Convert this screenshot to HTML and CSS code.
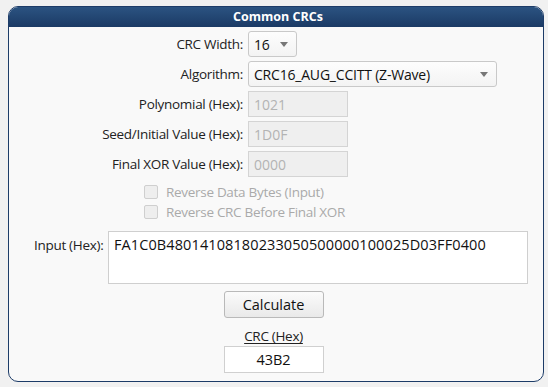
FILE: index.html
```html
<!DOCTYPE html>
<html lang="en">
<head>
    <meta charset="UTF-8">
    <title>Common CRCs</title>
    <link rel="stylesheet" href="styles.css">
</head>
<body>
    <div class="panel">
        <div class="panel-title">Common CRCs</div>
        <div class="panel-body">
            <div class="form-grid">
                <label class="field-label">CRC Width:</label>
                <div class="select-wrap width-select">
                    <select>
                        <option>16</option>
                    </select>
                    <svg class="arrow" width="8" height="5" viewBox="0 0 8 5"><path d="M0 0h8L4 5z" fill="#777"/></svg>
                </div>

                <label class="field-label">Algorithm:</label>
                <div class="select-wrap algo-select">
                    <select>
                        <option>CRC16_AUG_CCITT (Z-Wave)</option>
                    </select>
                    <svg class="arrow" width="8" height="5" viewBox="0 0 8 5"><path d="M0 0h8L4 5z" fill="#777"/></svg>
                </div>

                <label class="field-label">Polynomial (Hex):</label>
                <input class="hex-field" type="text" value="1021" disabled>

                <label class="field-label">Seed/Initial Value (Hex):</label>
                <input class="hex-field" type="text" value="1D0F" disabled>

                <label class="field-label">Final XOR Value (Hex):</label>
                <input class="hex-field" type="text" value="0000" disabled>
            </div>

            <div class="checks">
                <label class="check"><span class="box"></span>Reverse Data Bytes (Input)</label>
                <label class="check"><span class="box"></span>Reverse CRC Before Final XOR</label>
            </div>

            <div class="input-row">
                <label class="input-label">Input (Hex):</label>
                <textarea class="input-area">FA1C0B48014108180233050500000100025D03FF0400</textarea>
            </div>

            <div class="result">
                <button class="calc-btn">Calculate</button>
                <div class="result-label">CRC (Hex)</div>
                <div class="result-value">43B2</div>
            </div>
        </div>
    </div>
</body>
</html>
```

FILE: styles.css
```css
* {
    box-sizing: border-box;
    margin: 0;
    padding: 0;
}

body {
    background-color: #f1f1f1;
    font-family: 'Open Sans', 'Liberation Sans', sans-serif;
    font-size: 13px;
    color: #222;
    padding: 6px 5px 0 8px;
}

.panel {
    width: 536px;
    height: 376px;
    border: 1px solid #1d3c68;
    border-radius: 10px;
    background-color: #f9f9f9;
    overflow: hidden;
}

.panel-title {
    height: 20px;
    line-height: 20px;
    background: linear-gradient(#2b5381, #1b3a65);
    color: white;
    font-weight: bold;
    font-size: 12.5px;
    text-align: center;
    padding-left: 4px;
}

.panel-body {
    padding-top: 4px;
}

.form-grid {
    display: grid;
    grid-template-columns: 234px auto;
    column-gap: 5px;
    row-gap: 4px;
    justify-content: start;
    align-items: center;
}

.field-label {
    text-align: right;
    font-size: 13.5px;
    letter-spacing: -0.3px;
}

.select-wrap {
    position: relative;
    height: 26px;
}

.select-wrap select {
    appearance: none;
    -webkit-appearance: none;
    width: 100%;
    height: 26px;
    border: 1px solid #c9c9c9;
    border-radius: 3px;
    background: linear-gradient(#fdfdfd, #f3f3f3);
    font-family: inherit;
    font-size: 14px;
    color: #111;
    padding: 0 20px 0 5px;
    letter-spacing: -0.2px;
}

.width-select {
    width: 49px;
}

.algo-select {
    width: 249px;
}

.arrow {
    position: absolute;
    right: 9px;
    top: 11px;
}

.hex-field {
    width: 100px;
    height: 26px;
    border: 1px solid #d4d4d4;
    background-color: #efefef;
    color: #b3b3b3;
    font-family: inherit;
    font-size: 14px;
    padding: 0 5px;
}

.checks {
    padding: 5px 0 0 135px;
}

.check {
    display: flex;
    align-items: center;
    height: 20px;
    color: #aaa;
    font-size: 13.5px;
    letter-spacing: -0.3px;
}

.box {
    width: 14px;
    height: 14px;
    border: 1px solid #cfcfcf;
    border-radius: 2px;
    background-color: #eee;
    margin-right: 8px;
}

.input-row {
    display: flex;
    align-items: flex-start;
    padding: 9px 0 0 25px;
}

.input-label {
    width: 74px;
    padding-top: 5px;
    font-size: 13.5px;
    letter-spacing: -0.3px;
}

.input-area {
    width: 420px;
    height: 53px;
    border: 1px solid #cfcfcf;
    background-color: white;
    font-family: inherit;
    font-size: 14.5px;
    color: #111;
    padding: 3px 5px;
    resize: none;
    letter-spacing: 0.1px;
}

.result {
    display: flex;
    flex-direction: column;
    align-items: center;
    padding: 7px 5px 0 0;
}

.calc-btn {
    width: 100px;
    height: 27px;
    border: 1px solid #b9b9b9;
    border-radius: 3px;
    background: linear-gradient(#fbfbfb, #e9e9e9);
    font-family: inherit;
    font-size: 14.5px;
    color: #111;
}

.result-label {
    margin-top: 9px;
    font-size: 13.5px;
    letter-spacing: -0.3px;
    text-decoration: underline;
    text-underline-offset: 2px;
    line-height: 18px;
}

.result-value {
    margin-top: 1px;
    width: 100px;
    height: 27px;
    line-height: 25px;
    border: 1px solid #d0d0d0;
    background-color: white;
    text-align: center;
    font-size: 14.5px;
    color: #111;
}
```
